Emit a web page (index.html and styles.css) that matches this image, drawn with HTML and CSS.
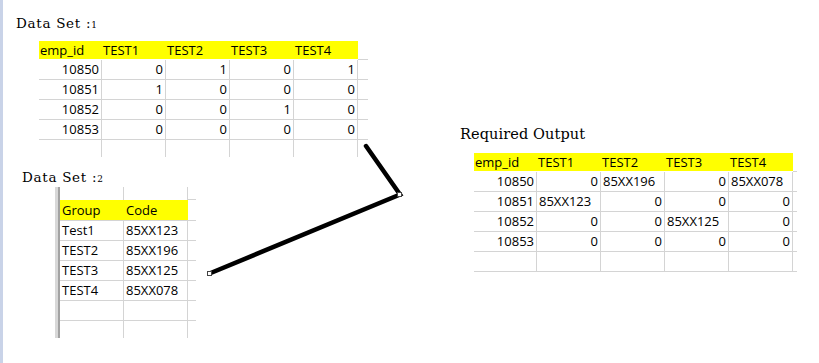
FILE: index.html
```html
<!DOCTYPE html>
<html>
<head>
<meta charset="utf-8">
<link rel="stylesheet" href="styles.css">
</head>
<body>
<div class="page">
  <div class="col-left">
    <div class="title t1">Data Set :<span class="osf">1</span></div>
    <div class="grid g1">
      <div class="hd">emp_id</div><div class="hd">TEST1</div><div class="hd">TEST2</div><div class="hd">TEST3</div><div class="hd">TEST4</div><div class="ext"></div>
      <div class="c num">10850</div><div class="c num">0</div><div class="c num">1</div><div class="c num">0</div><div class="c num">1</div><div class="ext"></div>
      <div class="c num">10851</div><div class="c num">1</div><div class="c num">0</div><div class="c num">0</div><div class="c num">0</div><div class="ext"></div>
      <div class="c num">10852</div><div class="c num">0</div><div class="c num">0</div><div class="c num">1</div><div class="c num">0</div><div class="ext"></div>
      <div class="c num">10853</div><div class="c num">0</div><div class="c num">0</div><div class="c num">0</div><div class="c num">0</div><div class="ext"></div>
      <div class="blank"></div><div class="blank"></div><div class="blank"></div><div class="blank"></div><div class="blank"></div><div></div>
    </div>

    <div class="title t2">Data Set :<span class="osf">2</span></div>
    <div class="t2wrap">
      <div class="bar"></div>
      <div class="grid g2">
        <div class="blank"></div><div class="blank"></div><div class="ext"></div>
        <div class="hd2">Group</div><div class="hd2">Code</div><div class="ext"></div>
        <div class="c txt">Test1</div><div class="c txt">85XX123</div><div class="ext"></div>
        <div class="c txt">TEST2</div><div class="c txt">85XX196</div><div class="ext"></div>
        <div class="c txt">TEST3</div><div class="c txt">85XX125</div><div class="ext"></div>
        <div class="c txt">TEST4</div><div class="c txt">85XX078</div><div class="ext"></div>
        <div class="c"></div><div class="c"></div><div class="ext"></div>
        <div class="blank"></div><div class="blank"></div><div></div>
      </div>
    </div>
  </div>

  <div class="col-right">
    <div class="title t3">Required Output</div>
    <div class="grid g3">
      <div class="hd">emp_id</div><div class="hd">TEST1</div><div class="hd">TEST2</div><div class="hd">TEST3</div><div class="hd">TEST4</div><div class="ext"></div>
      <div class="c num">10850</div><div class="c num">0</div><div class="c txt">85XX196</div><div class="c num">0</div><div class="c txt">85XX078</div><div class="ext"></div>
      <div class="c num">10851</div><div class="c txt">85XX123</div><div class="c num">0</div><div class="c num">0</div><div class="c num">0</div><div class="ext"></div>
      <div class="c num">10852</div><div class="c num">0</div><div class="c num">0</div><div class="c txt">85XX125</div><div class="c num">0</div><div class="ext"></div>
      <div class="c num">10853</div><div class="c num">0</div><div class="c num">0</div><div class="c num">0</div><div class="c num">0</div><div class="ext"></div>
      <div class="c"></div><div class="c"></div><div class="c"></div><div class="c"></div><div class="c"></div><div class="ext"></div>
    </div>
  </div>

  <svg class="connector" width="819" height="363" viewBox="0 0 819 363">
    <polyline points="366,146 400,194.5 209.5,273.5" fill="none" stroke="#000" stroke-width="4.5" stroke-linecap="round" stroke-linejoin="miter"/>
    <rect x="397.5" y="192.5" width="4" height="4" fill="#fff" stroke="#444" stroke-width="1"/>
    <rect x="207.5" y="271.5" width="4" height="4" fill="#fff" stroke="#444" stroke-width="1"/>
  </svg>
</div>
</body>
</html>
```
FILE: styles.css
```css
* { box-sizing: border-box; }

html, body {
  margin: 0;
  padding: 0;
  background: #fff;
}

.page {
  position: relative;
  display: flex;
  width: 819px;
  height: 363px;
  overflow: hidden;
  border-left: 3px solid #c9d3e8;
  color: #000;
}

.col-left {
  width: 437px;
  flex: none;
}

.col-right {
  flex: 1;
  padding-top: 125px;
}

.title {
  font-family: "DejaVu Serif", "Liberation Serif", serif;
  color: #000;
  white-space: nowrap;
}

.t1, .t2 {
  font-size: 13.5px;
  letter-spacing: 0.7px;
}

.t1 {
  line-height: 16px;
  padding: 15px 0 0 13px;
}

.t2 {
  line-height: 15px;
  margin-top: 13px;
  padding-left: 19px;
}

.t3 {
  font-size: 14.5px;
  line-height: 18px;
  letter-spacing: 0.1px;
  padding-left: 20px;
}

.osf {
  font-size: 0.66em;
}

.grid {
  display: grid;
  font-family: "Open Sans", "Noto Sans", sans-serif;
  font-size: 13px;
  color: #000;
}

.g1 {
  margin: 8px 0 0 36px;
  width: 329px;
  grid-template-columns: 63px 64px 64px 64px 64px 10px;
  grid-template-rows: 19px repeat(4, 20px) 17px;
}

.g3 {
  margin: 10px 0 0 34px;
  width: 323px;
  grid-template-columns: 63px 64px 64px 64px 64px 4px;
  grid-template-rows: 19px repeat(5, 20px);
}

.t2wrap {
  display: flex;
  margin-left: 52px;
}

.bar {
  width: 5px;
  height: 151px;
  background: #d8d8d8;
  border-right: 2px solid #a3a3a3;
}

.g2 {
  width: 136px;
  grid-template-columns: 64px 64px 8px;
  grid-template-rows: 13px 21px repeat(5, 20px) 17px;
}

.hd {
  background: #ffff00;
  border-bottom: 1px solid #fff;
  line-height: 18px;
  padding-left: 1px;
  white-space: nowrap;
}

.hd2 {
  background: #ffff00;
  border-bottom: 1px solid #d4d4d4;
  line-height: 20px;
  padding-left: 2px;
  white-space: nowrap;
}

.c {
  border-right: 1px solid #d4d4d4;
  border-bottom: 1px solid #d4d4d4;
  line-height: 19px;
  white-space: nowrap;
  overflow: hidden;
}

.num {
  text-align: right;
  padding-right: 2px;
}

.txt {
  text-align: left;
  padding-left: 2px;
}

.ext {
  border-bottom: 1px solid #d4d4d4;
}

.blank {
  border-right: 1px solid #d4d4d4;
}

.connector {
  position: absolute;
  left: -3px;
  top: 0;
  pointer-events: none;
}
```
